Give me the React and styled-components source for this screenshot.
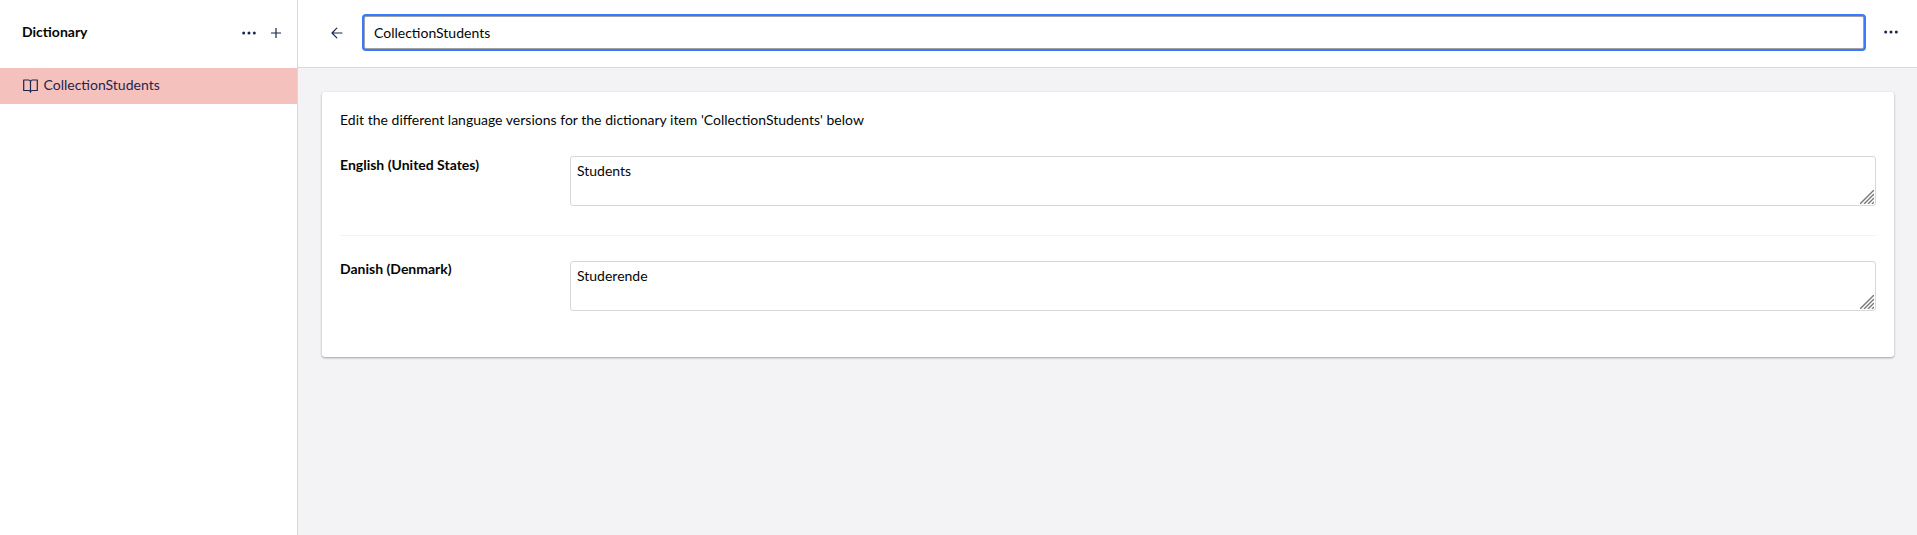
import React from "react";
import styled, { createGlobalStyle } from "styled-components";

const GlobalStyle = createGlobalStyle`
  *, *::before, *::after { box-sizing: border-box; }
  body {
    margin: 0;
    font-family: Lato, "Liberation Sans", sans-serif;
    font-size: 14px;
    line-height: 20px;
    color: #060606;
    overflow: hidden;
  }
`;

const Shell = styled.div`
  display: flex;
  height: 100vh;
  background: #f3f3f5;
`;

const Sidebar = styled.aside`
  flex: 0 0 298px;
  background: #fff;
  border-right: 1px solid #d8d7d9;
`;

const SidebarHeader = styled.header`
  display: flex;
  align-items: center;
  height: 68px;
  padding: 0 15px 2px 22px;
`;

const SidebarTitle = styled.h1`
  flex: 1;
  margin: 0;
  padding-bottom: 2px;
  font-size: 14px;
  font-weight: 700;
  color: #060606;
`;

const IconButton = styled.button`
  display: flex;
  flex: none;
  align-items: center;
  justify-content: center;
  width: ${(p) => p.$width || 16}px;
  height: 20px;
  margin: ${(p) => p.$margin || 0};
  padding: 0;
  border: 0;
  background: none;
  color: #1b264f;
`;

const MenuItem = styled.a`
  display: flex;
  align-items: center;
  gap: 6px;
  height: 36px;
  padding: 0 22px 0 22.5px;
  background: #f5c1bc;
  color: #1b264f;
  line-height: 34px;
`;

const MenuLabel = styled.span`
  padding-bottom: 2px;
`;

const Main = styled.main`
  flex: 1;
  min-width: 0;
`;

const Toolbar = styled.header`
  display: flex;
  align-items: center;
  height: 68px;
  padding: 0 18px 3px 32px;
  background: #fff;
  border-bottom: 1px solid #d8d7d9;
`;

const NameInput = styled.input`
  flex: 1;
  min-width: 0;
  height: 33px;
  margin: 0;
  padding: 1px 9px;
  border: 1px solid #a1a1a1;
  border-radius: 2px;
  outline: none;
  box-shadow: 0 0 0 2px #3879ff;
  font: inherit;
  color: #060606;
`;

const Card = styled.section`
  margin: 24px 23px 0 24px;
  height: 265px;
  padding: 18px;
  background: #fff;
  border-radius: 3px;
  box-shadow: 0 1px 3px rgba(0, 0, 0, 0.12), 0 1px 2px rgba(0, 0, 0, 0.24);
`;

const Intro = styled.p`
  margin: 0 0 8px;
  word-spacing: 0.08px;
`;

const Property = styled.div`
  display: grid;
  grid-template-columns: 200px 1fr;
  column-gap: 30px;
  height: ${(p) => (p.$last ? 80 : 98)}px;
  padding: ${(p) => (p.$last ? 25 : 18)}px 0 0;
  border-bottom: ${(p) => (p.$last ? "0" : "1px solid #f3f3f5")};
`;

const PropertyLabel = styled.label`
  font-weight: 700;
  margin-top: ${(p) => (p.$last ? -2 : -1)}px;
`;

const Field = styled.div`
  position: relative;
  height: 50px;
`;

const TextArea = styled.textarea`
  display: block;
  width: 100%;
  height: 50px;
  margin: 0;
  padding: 4px 6px;
  border: 1px solid #d8d7d9;
  border-radius: 3px;
  outline: none;
  resize: none;
  font: inherit;
  color: #060606;
`;

const Grip = styled.svg`
  position: absolute;
  right: 2px;
  bottom: 2px;
  pointer-events: none;
`;

const Dots = () => (
  <svg width="16" height="16" viewBox="0 0 16 16" fill="currentColor">
    <circle cx="2.7" cy="8" r="1.5" />
    <circle cx="8" cy="8" r="1.5" />
    <circle cx="13.3" cy="8" r="1.5" />
  </svg>
);

const Plus = () => (
  <svg width="12" height="12" viewBox="0 0 12 12" stroke="currentColor" strokeWidth="1.2">
    <path d="M6 1v10M1 6h10" />
  </svg>
);

const Arrow = () => (
  <svg width="12" height="12" viewBox="0 0 12 12" fill="none" stroke="currentColor" strokeWidth="1.2" strokeLinecap="round" strokeLinejoin="round">
    <path d="M11 6H1M5.8 1.2L1 6l4.8 4.8" />
  </svg>
);

const Book = () => (
  <svg width="15" height="14" viewBox="0 0 15 14" fill="none" stroke="currentColor" strokeWidth="1.2" strokeLinejoin="round">
    <path d="M7.5 3C7.5 1.8 6.7 1 5.5 1H.7v10.5h4.8c1.2 0 2 .7 2 1.7 0-1 .8-1.7 2-1.7h4.8V1H9.5c-1.2 0-2 .8-2 2zM7.5 3v10" />
  </svg>
);

const translations = [
  { language: "English (United States)", value: "Students" },
  { language: "Danish (Denmark)", value: "Studerende" },
];

export default function App() {
  return (
    <>
      <GlobalStyle />
      <Shell>
        <Sidebar>
          <SidebarHeader>
            <SidebarTitle>Dictionary</SidebarTitle>
            <IconButton aria-label="Actions" $margin="0 13px 0 0"><Dots /></IconButton>
            <IconButton aria-label="Create" $width={12}><Plus /></IconButton>
          </SidebarHeader>
          <MenuItem>
            <Book />
            <MenuLabel>CollectionStudents</MenuLabel>
          </MenuItem>
        </Sidebar>
        <Main>
          <Toolbar>
            <IconButton aria-label="Back" $width={14} $margin="1px 20px 0 0"><Arrow /></IconButton>
            <NameInput defaultValue="CollectionStudents" aria-label="Name" />
            <IconButton aria-label="Actions" $margin="0 0 0 19px"><Dots /></IconButton>
          </Toolbar>
          <Card>
            <Intro>Edit the different language versions for the dictionary item 'CollectionStudents' below</Intro>
            {translations.map((t, i) => {
              const last = i === translations.length - 1;
              return (
                <Property key={t.language} $last={last}>
                  <PropertyLabel $last={last}>{t.language}</PropertyLabel>
                  <Field>
                    <TextArea defaultValue={t.value} aria-label={t.language} />
                    <Grip width="14" height="14" viewBox="0 0 14 14" stroke="#777" strokeWidth="1.4">
                      <path d="M0 14L14 0M4 14L14 4M8 14L14 8M12 14L14 12" />
                    </Grip>
                  </Field>
                </Property>
              );
            })}
          </Card>
        </Main>
      </Shell>
    </>
  );
}
